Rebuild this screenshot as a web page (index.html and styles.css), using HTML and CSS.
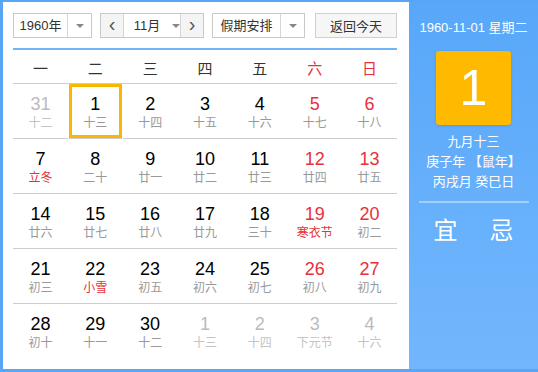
FILE: index.html
```html
<!DOCTYPE html>
<html lang="zh-CN">
<head>
  <meta charset="UTF-8" />
  <title>万年历</title>
  <link rel="stylesheet" href="styles.css">
</head>
<body>

<div class="calendar">

  <div class="main">
    <div class="toolbar">
      <div class="select year-select">
        <span class="select-text">1960年</span>
        <span class="select-arrow"><i class="caret"></i></span>
      </div>

      <div class="month-group">
        <span class="nav-btn">&lsaquo;</span>
        <div class="month-select">
          <span class="select-text">11月</span>
          <i class="caret"></i>
        </div>
        <span class="nav-btn">&rsaquo;</span>
      </div>

      <div class="select holiday-select">
        <span class="select-text">假期安排</span>
        <span class="select-arrow"><i class="caret"></i></span>
      </div>

      <button class="today-btn">返回今天</button>
    </div>

    <div class="weekdays">
      <span>一</span><span>二</span><span>三</span><span>四</span><span>五</span>
      <span class="weekend">六</span><span class="weekend">日</span>
    </div>

    <div class="days">
      <div class="day other"><b>31</b><small>十二</small></div>
      <div class="day selected"><b>1</b><small>十三</small></div>
      <div class="day"><b>2</b><small>十四</small></div>
      <div class="day"><b>3</b><small>十五</small></div>
      <div class="day"><b>4</b><small>十六</small></div>
      <div class="day weekend"><b>5</b><small>十七</small></div>
      <div class="day weekend"><b>6</b><small>十八</small></div>

      <div class="day"><b>7</b><small class="festival">立冬</small></div>
      <div class="day"><b>8</b><small>二十</small></div>
      <div class="day"><b>9</b><small>廿一</small></div>
      <div class="day"><b>10</b><small>廿二</small></div>
      <div class="day"><b>11</b><small>廿三</small></div>
      <div class="day weekend"><b>12</b><small>廿四</small></div>
      <div class="day weekend"><b>13</b><small>廿五</small></div>

      <div class="day"><b>14</b><small>廿六</small></div>
      <div class="day"><b>15</b><small>廿七</small></div>
      <div class="day"><b>16</b><small>廿八</small></div>
      <div class="day"><b>17</b><small>廿九</small></div>
      <div class="day"><b>18</b><small>三十</small></div>
      <div class="day weekend"><b>19</b><small class="festival">寒衣节</small></div>
      <div class="day weekend"><b>20</b><small>初二</small></div>

      <div class="day"><b>21</b><small>初三</small></div>
      <div class="day"><b>22</b><small class="festival">小雪</small></div>
      <div class="day"><b>23</b><small>初五</small></div>
      <div class="day"><b>24</b><small>初六</small></div>
      <div class="day"><b>25</b><small>初七</small></div>
      <div class="day weekend"><b>26</b><small>初八</small></div>
      <div class="day weekend"><b>27</b><small>初九</small></div>

      <div class="day last"><b>28</b><small>初十</small></div>
      <div class="day last"><b>29</b><small>十一</small></div>
      <div class="day last"><b>30</b><small>十二</small></div>
      <div class="day last other"><b>1</b><small>十三</small></div>
      <div class="day last other"><b>2</b><small>十四</small></div>
      <div class="day last other"><b>3</b><small>下元节</small></div>
      <div class="day last other"><b>4</b><small>十六</small></div>
    </div>
  </div>

  <div class="side">
    <div class="side-date">1960-11-01 星期二</div>
    <div class="big-day">1</div>
    <div class="lunar">
      <p>九月十三</p>
      <p>庚子年 【鼠年】</p>
      <p>丙戌月 癸巳日</p>
    </div>
    <div class="side-line"></div>
    <div class="yiji">
      <span>宜</span>
      <span>忌</span>
    </div>
  </div>

</div>

</body>
</html>
```

FILE: styles.css
```css
body {
  margin: 0;
  font-family: "Liberation Sans", "Noto Sans CJK SC", sans-serif;
  background: #fff;
}

.calendar {
  display: flex;
  width: 538px;
  height: 372px;
  box-sizing: border-box;
  border-style: solid;
  border-color: #58a7f7;
  border-width: 2px 0 3px 3px;
  overflow: hidden;
}

.main {
  width: 406px;
  box-sizing: border-box;
  padding: 11px 12px 0 10px;
  background: #fff;
}

/* верхняя панель */
.toolbar {
  display: flex;
  height: 25px;
  gap: 8px;
  font-size: 13px;
  color: #333;
}

.select {
  display: flex;
  box-sizing: border-box;
  height: 25px;
  border: 1px solid #c9c9c9;
  background: #fff;
}

.select-text {
  flex: 1;
  line-height: 23px;
  text-align: center;
}

.select-arrow {
  width: 23px;
  border-left: 1px solid #d6d6d6;
  display: flex;
  align-items: center;
  justify-content: center;
}

.caret {
  width: 0;
  height: 0;
  border-left: 4px solid transparent;
  border-right: 4px solid transparent;
  border-top: 4px solid #888;
}

.year-select {
  width: 79px;
}

.holiday-select {
  width: 93px;
}

.month-group {
  display: flex;
  width: 104px;
  height: 25px;
  box-sizing: border-box;
  border: 1px solid #c9c9c9;
}

.nav-btn {
  width: 22px;
  background: #f4f4f4;
  text-align: center;
  line-height: 21px;
  font-size: 20px;
  color: #555;
}

.month-select {
  flex: 1;
  display: flex;
  align-items: center;
  justify-content: center;
  gap: 6px;
  border-left: 1px solid #d6d6d6;
  border-right: 1px solid #d6d6d6;
  padding-left: 4px;
}

.today-btn {
  margin-left: auto;
  width: 82px;
  height: 25px;
  border: 1px solid #cfcfcf;
  background: #f6f6f6;
  font-family: inherit;
  font-size: 13px;
  color: #333;
  padding: 0;
}

/* дни недели */
.weekdays {
  display: grid;
  grid-template-columns: repeat(7, 1fr);
  margin-top: 10px;
  border-top: 2px solid #74b3f5;
  height: 35px;
  align-items: center;
  text-align: center;
  font-size: 15px;
  color: #333;
  padding-top: 1px;
  box-sizing: border-box;
}

.weekdays .weekend {
  color: #e8303a;
}

/* сетка */
.days {
  display: grid;
  grid-template-columns: repeat(7, 1fr);
  border-top: 1px solid #cdcdcd;
}

.day {
  height: 55px;
  box-sizing: border-box;
  border-bottom: 1px solid #cdcdcd;
  display: flex;
  flex-direction: column;
  align-items: center;
  padding-top: 10px;
}

.day.last {
  border-bottom: none;
}

.day b {
  font-weight: normal;
  font-size: 18px;
  line-height: 20px;
  color: #000;
}

.day small {
  font-size: 12px;
  line-height: 18px;
  color: #999;
}

.day.weekend b {
  color: #e8303a;
}

.day small.festival {
  color: #e8303a;
}

.day.other b {
  color: #bbb;
}

.day.other small {
  color: #c4c4c4;
}

.day.selected {
  box-shadow: inset 0 0 0 3px #f8b700;
  margin: 0 1px;
}

/* правая панель */
.side {
  flex: 1;
  background: linear-gradient(#58a7f9, #72b7fd);
  color: #fff;
  display: flex;
  flex-direction: column;
  align-items: center;
}

.side-date {
  margin-top: 18px;
  font-size: 13px;
  line-height: 16px;
}

.big-day {
  margin-top: 15px;
  width: 75px;
  height: 74px;
  background: #ffba00;
  border-radius: 3px;
  font-size: 50px;
  line-height: 74px;
  text-align: center;
  box-shadow: 0 1px 3px rgba(0, 0, 0, 0.12);
}

.lunar {
  margin-top: 7px;
  font-size: 13px;
  line-height: 20px;
  text-align: center;
}

.lunar p {
  margin: 0;
}

.side-line {
  margin-top: 9px;
  width: 110px;
  height: 2px;
  background: rgba(255, 255, 255, 0.4);
}

.yiji {
  display: flex;
  gap: 32px;
  margin-top: 13px;
  font-size: 24px;
  line-height: 30px;
}
```
